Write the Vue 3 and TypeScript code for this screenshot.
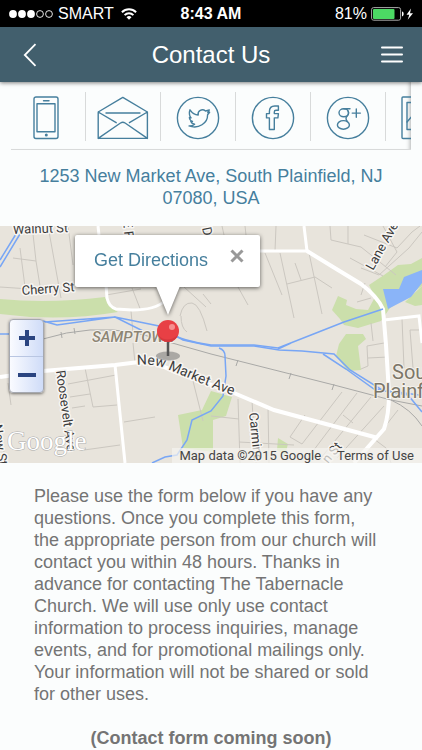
<script setup lang="ts">
import { ref } from 'vue'

const paragraph =
  'Please use the form below if you have any questions. Once you complete this form, the appropriate person from our church will contact you within 48 hours. Thanks in advance for contacting The Tabernacle Church. We will use only use contact information to process inquiries, manage events, and for promotional mailings only. Your information will not be shared or sold for other uses.'

const signal = [true, true, true, false, false]
const popupOpen = ref(true)
</script>

<template>
  <div class="screen">
    <div class="status">
      <div class="carrier">
        <svg width="46" height="10" viewBox="0 0 46 10" aria-hidden="true">
          <circle
            v-for="(on, i) in signal"
            :key="i"
            :cx="5 + i * 9"
            cy="5"
            :r="on ? 3.9 : 3.4"
            :fill="on ? '#fff' : 'none'"
            stroke="#fff"
            :stroke-width="on ? 0 : 0.9"
          />
        </svg>
        <span>SMART</span>
        <svg width="16" height="12" viewBox="0 0 16 12" fill="none" stroke="#fff" stroke-width="2" aria-hidden="true">
          <path d="M.9 4.2a10.2 10.2 0 0 1 14.2 0M3.6 7.1a6.3 6.3 0 0 1 8.8 0" />
          <path d="M8 11.8 5.5 9.2a3.6 3.6 0 0 1 5 0z" fill="#fff" stroke="none" />
        </svg>
      </div>
      <strong class="clock">8:43 AM</strong>
      <div class="power">
        <span>81%</span>
        <svg width="43" height="14" viewBox="0 0 43 14" aria-hidden="true">
          <rect x=".6" y=".6" width="29" height="12.6" rx="2" fill="none" stroke="#aaa" stroke-width="1" />
          <rect x="2" y="2" width="21.5" height="10" rx="1" fill="#4cd964" />
          <path d="M31 4.6c2.2.4 2.2 4.4 0 4.8z" fill="#fff" />
          <path d="M40 1.5 35.5 7.8h2.8l-1.6 5L42 6.2h-3z" fill="#fff" />
        </svg>
      </div>
    </div>

    <header class="bar">
      <button class="bar-button" type="button" aria-label="Back">
        <svg width="14" height="24" viewBox="0 0 14 24" fill="none" stroke="#fff" stroke-width="1.8"><path d="M12.5 1.2 1.8 12l10.7 10.8" /></svg>
      </button>
      <h1>Contact Us</h1>
      <button class="bar-button" type="button" aria-label="Menu">
        <svg width="22" height="18" viewBox="0 0 22 18" stroke="#fff" stroke-width="2" stroke-linecap="round"><path d="M1 1.500h20M1 8.500h20M1 15.500h20" /></svg>
      </button>
    </header>

    <main>
      <nav class="channels" aria-label="Contact channels">
        <a href="#phone" aria-label="Phone">
          <svg width="52" height="44" viewBox="0 0 52 44">
            <rect x="12" y="1" width="24" height="41.5" rx="2" />
            <rect x="15" y="7.8" width="18" height="28" />
            <path d="M21.500 4.8h5.5" />
            <circle cx="24.300" cy="39" r=".8" fill="#467f9d" />
          </svg>
        </a>
        <a href="#email" aria-label="Email">
          <svg width="52" height="44" viewBox="0 0 52 44">
            <path d="M1.2 16 25.8 1.4 50.4 16v26.4H1.2zM1.2 16l18 10.7M50.4 16l-18 10.7M9 17h34M1.2 42.4 23.5 27q2.3-1.5 4.6 0l22.3 15.4" />
          </svg>
        </a>
        <a href="#twitter" aria-label="Twitter">
          <svg width="52" height="44" viewBox="0 0 52 44">
            <circle cx="26" cy="22" r="20.6" />
            <path d="M18 13.800c2 3 4.800 5 8.200 5.200-.9-4.2 4-6.9 7.3-4l3.8-1-1.5 2.6 1.8-.3-2 2.4c.2 8.2-8.9 14.900-18.6 11.200 2.2.1 4.3-.5 5.6-1.7-1.9-.2-3.3-1.2-3.8-2.7h1.7c-1.9-.8-3-2.2-3.1-4l1.6.3c-1.8-1.7-2-5.500-1-8z" />
          </svg>
        </a>
        <a href="#facebook" aria-label="Facebook">
          <svg width="52" height="44" viewBox="0 0 52 44">
            <circle cx="26" cy="22" r="20.6" />
            <path d="M22.400 33.5V21.900h-2.900v-4.300h2.900v-2c0-3.600 1.900-5.600 5.400-5.600h3.600v4.300h-2.400c-1.300 0-1.700.5-1.700 1.7v1.600h4.100l-.5 4.300h-3.600v11.600z" />
          </svg>
        </a>
        <a href="#google-plus" aria-label="Google Plus">
          <svg width="52" height="44" viewBox="0 0 52 44">
            <circle cx="26" cy="22" r="20.6" />
            <ellipse cx="21.800" cy="16.800" rx="4.800" ry="4" />
            <ellipse cx="21.400" cy="28.900" rx="6" ry="4.300" />
            <path d="M21.800 12.800H28M25.600 14.300q2.200 3.200-.8 6.200-1.800 2 .6 5M34.300 13v8.200M30.200 17.100h8.200" />
          </svg>
        </a>
        <a href="#photos" aria-label="Photos">
          <svg width="52" height="44" viewBox="0 0 52 44">
            <rect x="5" y="1" width="42" height="41.500" rx="1" />
            <rect x="10" y="6.500" width="32" height="27" />
            <path d="m10 26 6-7 9 10 7-6 10 9" />
          </svg>
        </a>
      </nav>

      <p class="address"><a href="#map">1253 New Market Ave, South Plainfield, NJ 07080, USA</a></p>

      <section id="map" class="map" aria-label="Map">
        <svg class="tiles" viewBox="0 0 422 237" preserveAspectRatio="xMidYMid slice">
          <rect width="422" height="237" fill="#e8e4dc" />
          <g fill="#cbdfab">
            <path d="M0 73Q50 78 105 71L109 80 118 86Q60 96 0 88z" />
            <path d="M422 32 411 38 398 39 384 49 369 59 375 71 368 84 356 83 346 79 347 74 338 70 332 84 340 93 344 99 358 102 381 95 390 82 422 60z" />
            <path d="M422 60V79L415 80 405 76z" />
            <path d="M346 108H363L366 113 358 120 361 144 348 145 336 130 339 118z" />
            <path d="M178 189 202 184 211 165 232 171 226 190 213 194V226L183 222z" />
            <path d="m278 212 10 6-3 11-8-5z" />
          </g>
          <path fill="#8ab4f8" d="M383 63 399 63 404 51 422 44V57L411 71 388 83z" />
          <g class="minor">
            <path d="M13 32l23 3M20 22l5 39M33 8l3 27 5 31M48 0l13 72M68 0l5 39M0 61l30 2M132 62l9 23M106 69l35-6M131 85l2 22M180 90q3-14 12-13 8 1 15 28M181 90q0 12 6 16M184 61l22 20M203 68l8 10" />
            <path d="M222 0l2 9M245 0l1 9M276 0l-1 25M330 0l1 14 17 4M348 0v18l13 3 35 28M364 9l33 13 15-16 8-6M383 0l14 26-12 15M350 32l33 18M422 6 409 22l-30 27-18-7M365 57 361 69M265 27l17 42M280 27l14 65M309 27l13 61M287 58l28-7 17 11M295 37l6 17M238 61l10 18M357 76l14-4M371 97l2 18M402 93l2 49M384 117l-17 3 1 20-7 3M368 132l20-1M422 104h-12l3 38" />
            <path d="M85 142l8 39 24-2M68 158l48-9M70 171l20-3M72 182l13-2M133 117l2 20M8 157l3 22M124 196l31-5M84 224l36-5M193 155l10 40M238 173l2 64M252 175l4 62M268 181l1 56M211 190l28 3M239 216l55 3M342 166l-40 52-12-7 15-22M357 167l-50 66M371 171l-51 62M384 180l-47 52M398 184l-30 38M343 189l10 8M374 213l12 9 5 15M0 211l4 15" />
          </g>
          <g class="road">
            <path d="M98 0l1 9M106 58l1 14q2 9 9 11l16 1q23 0 33-9" />
            <path d="M260 25h47M304 0l3 25M384 94l35-4 3 27M115 139l10 98" />
            <path class="main-road" d="M307 25l31 19 23 14q16 12 22 25l3 36 3 48q0 22-5 36l-30 34M0 151l43-6 72-6 24-3q18 0 36 10l59 21 40 17 104 28" />
          </g>
          <g fill="none" stroke="#a9a9a7" stroke-width="1">
            <path d="M43 113Q90 98 137 107L211 128 334 159 391 174 422 180M391 174q20 9 31 26" />
            <path d="m61 106 1 6m12-10 1 6m163 26-2 6m55 7-2 6m45 5-2 6" />
          </g>
          <g class="water">
            <path d="M20 8 0 41M16 8 0 34M0 108h12M43 95l14 4 58-8 28 14M45 96l70-5 44 9 24 14 28 6h43l25 4 23 1 32 3 16 16 32 20 37 5 14 12" />
            <path d="M159 104q27 12 52 15l43 0 24 3 33-13 33-13 39-13M278 123l13-6M323 128l23 15 28 20 34 6 14 17" />
            <path d="M219 122q6 2 6 8l1 20-3 20-12 15-19 9-5 20-10 15-12 2-13 6" />
          </g>
          <g class="label">
            <text x="13" y="8" transform="rotate(-2 13 8)">Walnut St</text>
            <text x="22" y="69" transform="rotate(-4 22 69)">Cherry St</text>
            <text x="123" y="-5" transform="rotate(84 123 -5)">E F</text>
            <text x="202" y="2" transform="rotate(78 202 2)">D</text>
            <text x="373" y="45" transform="rotate(-61 373 45)">Lane Ave</text>
            <text x="56" y="145" transform="rotate(82 56 145)">Roosevelt Ave</text>
            <text x="249" y="187" transform="rotate(84 249 187)">Carmine</text>
            <text x="328" y="238" transform="rotate(-50 328 238)">n St</text>
            <text x="-7" y="199" transform="rotate(82 -7 199)">New St</text>
            <path id="market-line" fill="none" stroke="none" d="M137 139q17-2 35 6 30 13 75 30" />
            <text class="avenue"><textPath href="#market-line">New Market Ave</textPath></text>
          </g>
          <g class="place">
            <text class="village" x="92" y="116">SAMPTOWN</text>
            <text x="392" y="153">South</text>
            <text x="373" y="172">Plainfield</text>
          </g>
          <text class="google" x="7" y="224">Google</text>
        </svg>

        <svg class="pin" width="30" height="44" viewBox="0 0 30 44" aria-hidden="true">
          <ellipse cx="15" cy="38" rx="12" ry="4.500" fill="#777" opacity=".55" />
          <path d="M15 22v16" stroke="#555" stroke-width="2.500" />
          <circle cx="15" cy="13" r="11" fill="#e84045" />
          <path d="M5 17q9 9 20 0-3 7-10 7-7 0-10-7z" fill="#d4383e" />
          <circle cx="19" cy="9" r="3" fill="#f69090" />
        </svg>

        <div v-if="popupOpen" class="popup">
          <a href="#directions">Get Directions</a>
          <button type="button" aria-label="Close" @click="popupOpen = false">
            <svg width="14" height="14" viewBox="0 0 14 14" stroke="#999" stroke-width="3"><path d="m1.500 1.500 11 11M12.500 1.500l-11 11" /></svg>
          </button>
        </div>

        <div class="zoom">
          <button type="button" aria-label="Zoom in">
            <svg width="18" height="18" viewBox="0 0 18 18" stroke="#2a4480" stroke-width="4"><path d="M1 9h16M9 1v16" /></svg>
          </button>
          <button type="button" aria-label="Zoom out">
            <svg width="18" height="18" viewBox="0 0 18 18" stroke="#2a4480" stroke-width="4"><path d="M0 9h18" /></svg>
          </button>
        </div>

        <div class="credits">
          <span>Map data ©2015 Google</span>
          <a href="#terms">Terms of Use</a>
        </div>
      </section>

      <section class="copy">
        <p class="intro">{{ paragraph }}</p>
        <p class="soon">(Contact form coming soon)</p>
      </section>
    </main>
  </div>
</template>

<style>
body {
  background: #fbfdfd;
}
</style>

<style scoped>
.screen {
  font-family: "Liberation Sans", Arial, sans-serif;
  font-size: 18px;
  line-height: 22px;
  color: #747474;
}
p,
h1 {
  margin: 0;
}
a {
  color: #467f9d;
  text-decoration: none;
}
button {
  display: flex;
  align-items: center;
  justify-content: center;
  padding: 0;
  border: 0;
  background: none;
  cursor: pointer;
}
.status {
  display: grid;
  grid-template-columns: 1fr auto 1fr;
  align-items: center;
  height: 27px;
  padding: 0 8px;
  background: #000;
  color: #fff;
  font-size: 16px;
}
.carrier,
.power {
  display: flex;
  align-items: center;
  gap: 4px;
}
.carrier svg:last-child {
  margin-left: 3px;
}
.power {
  justify-content: flex-end;
}
.bar {
  position: relative;
  display: flex;
  align-items: center;
  justify-content: space-between;
  height: 55px;
  padding: 0 8px;
  background: #425f6d;
  box-shadow: 0 1px 4px rgba(0, 0, 0, 0.5);
}
.bar h1 {
  color: #fff;
  font-size: 24px;
  font-weight: 400;
  line-height: 28px;
}
.bar-button {
  width: 44px;
  height: 44px;
}
.channels {
  display: flex;
  margin: 0 11px;
  padding: 10px 0 8px;
  overflow: hidden;
  border-bottom: 1px solid #d8dada;
  box-shadow: inset -5px 0 4px -4px rgba(0, 0, 0, 0.3);
}
.channels a {
  display: flex;
  flex: 0 0 75px;
  box-sizing: border-box;
  align-items: center;
  justify-content: center;
  height: 49px;
  padding-top: 2px;
  border-right: 1px solid #d8dada;
}
.channels svg {
  fill: none;
  stroke: #467f9d;
  stroke-width: 1.4;
  stroke-linejoin: round;
  stroke-linecap: round;
}
.address {
  padding: 15px 32px 17px;
  text-align: center;
}
.map {
  position: relative;
  height: 237px;
  overflow: hidden;
}
.tiles {
  display: block;
  width: 100%;
  height: 100%;
  font-family: Roboto, sans-serif;
}
.minor {
  fill: none;
  stroke: #cbc7c0;
  stroke-width: 1;
}
.road {
  fill: none;
  stroke: #fff;
  stroke-width: 3;
}
.main-road {
  stroke-width: 4;
}
.water {
  fill: none;
  stroke: #78a6f5;
  stroke-width: 1.5;
}
.label {
  fill: #3c3c3c;
  stroke: #f8f6f3;
  stroke-width: 3;
  stroke-linejoin: round;
  paint-order: stroke;
  font-size: 13px;
}
.avenue {
  font-size: 14px;
}
.place {
  fill: #7c7668;
  stroke: #f4f1ec;
  stroke-width: 2;
  paint-order: stroke;
  font-size: 20px;
}
.village {
  fill: #8d8574;
  font-size: 15px;
  font-style: italic;
  font-weight: 500;
}
.google {
  fill: #fff;
  stroke: #aaa;
  stroke-width: 1;
  paint-order: stroke;
  font-family: "Liberation Serif", serif;
  font-size: 27px;
}
.pin {
  position: absolute;
  top: 92px;
  left: 153px;
}
.popup {
  position: absolute;
  top: 9px;
  left: 75px;
  display: flex;
  box-sizing: border-box;
  justify-content: space-between;
  width: 185px;
  height: 52px;
  padding: 14px 16px 0 19px;
  border-radius: 2px;
  background: #fff;
  filter: drop-shadow(0 1px 2px rgba(0, 0, 0, 0.6));
}
.popup::after {
  content: "";
  position: absolute;
  top: 51px;
  left: 81px;
  width: 24px;
  height: 29px;
  background: #fff;
  clip-path: polygon(0 0, 100% 0, 50% 100%);
}
.popup button {
  width: 14px;
  height: 14px;
}
.zoom {
  position: absolute;
  top: 93px;
  left: 9px;
  box-sizing: border-box;
  width: 35px;
  border: 1px solid #a5a8b0;
  border-radius: 4px;
  background: linear-gradient(90deg, #fafbff, #cfdcf8);
  box-shadow: 0 1px 3px rgba(0, 0, 0, 0.5);
}
.zoom button {
  width: 100%;
  height: 36px;
}
.zoom button + button {
  border-top: 1px solid #b9c6e2;
}
.credits {
  position: absolute;
  right: 0;
  bottom: 0;
  display: flex;
  gap: 16px;
  padding: 0 8px 0 7px;
  background: rgba(245, 243, 240, 0.7);
  color: #444;
  font-family: Roboto, sans-serif;
  font-size: 13px;
  line-height: 15px;
}
.credits a {
  color: inherit;
}
.copy {
  padding: 22px 34px 0;
}
.intro {
  padding-right: 6px;
}
.soon {
  margin-top: 22px;
  font-weight: 700;
  text-align: center;
}
</style>
